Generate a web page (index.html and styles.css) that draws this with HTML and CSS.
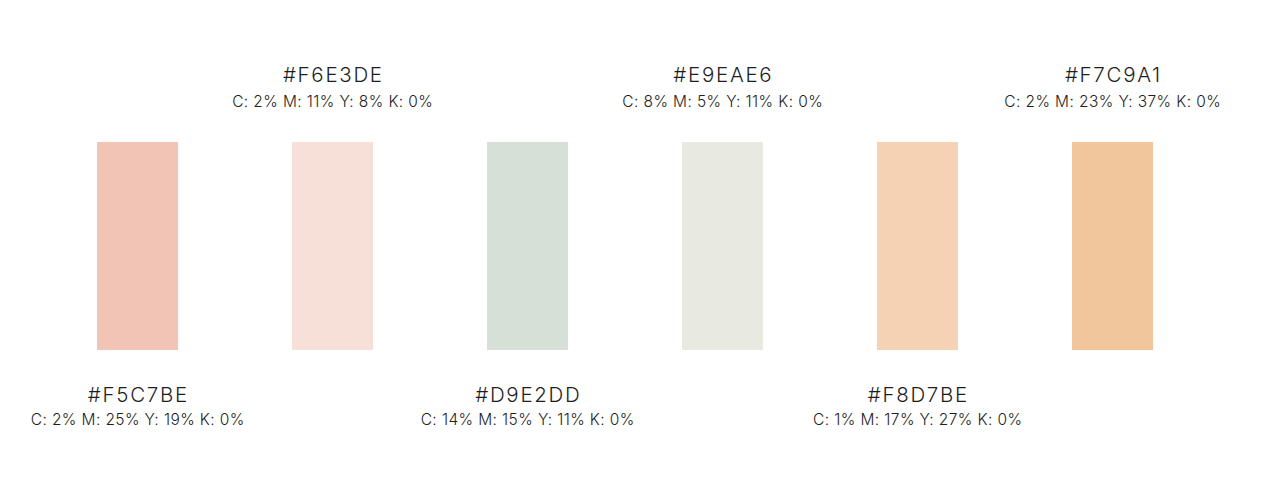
FILE: index.html
```html
<!DOCTYPE html>
<html lang="en">
<head>
<meta charset="utf-8">
<title>Palette</title>
<link rel="stylesheet" href="styles.css">
</head>
<body>
<div class="palette">
  <div class="col">
    <div class="label top"></div>
    <div class="swatch s1"></div>
    <div class="label bottom">
      <div class="hex">#F5C7BE</div>
      <div class="cmyk">C: 2% M: 25% Y: 19% K: 0%</div>
    </div>
  </div>
  <div class="col">
    <div class="label top">
      <div class="hex">#F6E3DE</div>
      <div class="cmyk">C: 2% M: 11% Y: 8% K: 0%</div>
    </div>
    <div class="swatch s2"></div>
    <div class="label bottom"></div>
  </div>
  <div class="col">
    <div class="label top"></div>
    <div class="swatch s3"></div>
    <div class="label bottom">
      <div class="hex">#D9E2DD</div>
      <div class="cmyk">C: 14% M: 15% Y: 11% K: 0%</div>
    </div>
  </div>
  <div class="col">
    <div class="label top">
      <div class="hex">#E9EAE6</div>
      <div class="cmyk">C: 8% M: 5% Y: 11% K: 0%</div>
    </div>
    <div class="swatch s4"></div>
    <div class="label bottom"></div>
  </div>
  <div class="col">
    <div class="label top"></div>
    <div class="swatch s5"></div>
    <div class="label bottom">
      <div class="hex">#F8D7BE</div>
      <div class="cmyk">C: 1% M: 17% Y: 27% K: 0%</div>
    </div>
  </div>
  <div class="col">
    <div class="label top">
      <div class="hex">#F7C9A1</div>
      <div class="cmyk">C: 2% M: 23% Y: 37% K: 0%</div>
    </div>
    <div class="swatch s6"></div>
    <div class="label bottom"></div>
  </div>
</div>
</body>
</html>
```
FILE: styles.css
```css
html, body {
  margin: 0;
  padding: 0;
  background: #ffffff;
}
body {
  font-family: Inter, Lato, sans-serif;
  font-weight: 350;
  color: #1e1e1e;
}
.palette {
  display: flex;
  padding: 63px 0 0 40px;
}
.col {
  width: 195px;
  display: flex;
  flex-direction: column;
  align-items: center;
}
.label {
  height: 48px;
  text-align: center;
  white-space: nowrap;
}
.label.bottom {
  margin-top: 33px;
}
.hex {
  font-size: 20.5px;
  line-height: 24px;
  letter-spacing: 1.7px;
  text-indent: 1.7px;
}
.cmyk {
  font-size: 15.5px;
  line-height: 18px;
  letter-spacing: 0.4px;
  text-indent: 0.4px;
}
.top .cmyk {
  margin-top: 6px;
}
.bottom .cmyk {
  margin-top: 4px;
}
.swatch {
  width: 81px;
  height: 208px;
  margin-top: 31px;
}
.s1 { background: #f1c4b6; }
.s2 { background: #f7e0d8; }
.s3 { background: #d7e0d7; }
.s4 { background: #e8e9e1; }
.s5 { background: #f6d2b4; }
.s6 { background: #f2c69c; }
```
